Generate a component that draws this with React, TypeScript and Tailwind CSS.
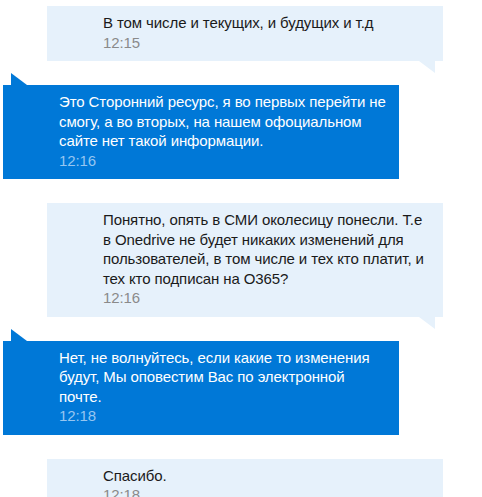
import React from 'react';

type Msg = { mine: boolean; lines: string[]; time: string };

const messages: Msg[] = [
    { mine: true, lines: ['В том числе и текущих, и будущих и т.д'], time: '12:15' },
    {
        mine: false,
        lines: ['Это Сторонний ресурс, я во первых перейти не', 'смогу, а во вторых, на нашем офоциальном', 'сайте нет такой информации.'],
        time: '12:16',
    },
    {
        mine: true,
        lines: [
            'Понятно, опять в СМИ околесицу понесли. Т.е',
            'в Onedrive не будет никаких изменений для',
            'пользователей, в том числе и тех кто платит, и',
            'тех кто подписан на О365?',
        ],
        time: '12:16',
    },
    {
        mine: false,
        lines: ['Нет, не волнуйтесь, если какие то изменения', 'будут, Мы оповестим Вас по электронной', 'почте.'],
        time: '12:18',
    },
    { mine: true, lines: ['Спасибо.'], time: '12:18' },
];

const Lines: React.FC<{ lines: string[] }> = ({ lines }) => (
    <p>
        {lines.map((l, i) => (
            <span key={i} className="block whitespace-nowrap">{l}</span>
        ))}
    </p>
);

const Bubble: React.FC<{ msg: Msg }> = ({ msg }) => {
    if (msg.mine) {
        return (
            <div className="relative ml-[47px] w-[396px] bg-[#e6f1fb] pl-[56px] pr-[6px] pt-[7px] pb-[9px] text-[#1a1a1a]">
                <Lines lines={msg.lines} />
                <p className="text-[#8a8a8a]">{msg.time}</p>
                <svg className="absolute top-full right-[8px]" width="16" height="12" viewBox="0 0 16 12">
                    <polygon points="0,0 16,0 16,12" fill="#e6f1fb" />
                </svg>
            </div>
        );
    }
    return (
        <div className="relative ml-[3px] w-[396px] bg-[#0078d7] pl-[56px] pr-[6px] pt-[7px] pb-[9px] text-white">
            <Lines lines={msg.lines} />
            <p className="text-[#96c6f1]">{msg.time}</p>
            <svg className="absolute bottom-full left-[8px]" width="16" height="12" viewBox="0 0 16 12">
                <polygon points="0,0 0,12 16,12" fill="#0078d7" />
            </svg>
        </div>
    );
};

export default function App() {
    return (
        <div className="w-[482px] h-[497px] overflow-hidden bg-white pt-[6px] text-[15px] leading-[19.5px] tracking-[-0.1px]" style={{ fontFamily: '"Liberation Sans", Arial, sans-serif' }}>
            <div className="flex flex-col gap-6">
                {messages.map((m, i) => (
                    <Bubble key={i} msg={m} />
                ))}
            </div>
        </div>
    );
}
